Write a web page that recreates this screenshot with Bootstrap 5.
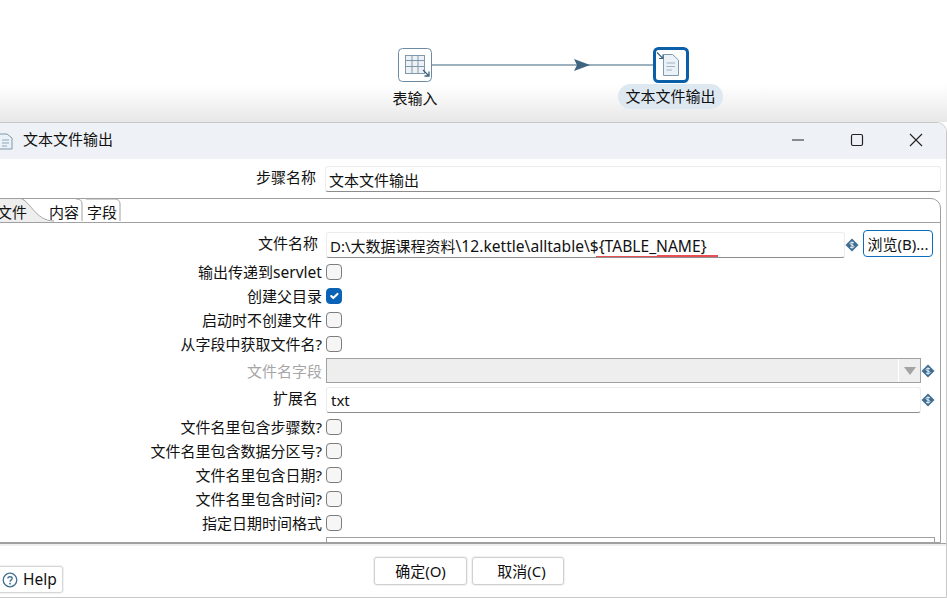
<!DOCTYPE html>
<html lang="zh">
<head>
<meta charset="utf-8">
<title>文本文件输出</title>
<link href="https://cdn.jsdelivr.net/npm/bootstrap@5.3.0/dist/css/bootstrap.min.css" rel="stylesheet">
<style>
html,body{margin:0;height:598px;overflow:hidden;background:#fff}
body{width:947px;font-family:"Noto Sans","Noto Sans CJK SC",sans-serif;font-size:15px;color:#111;line-height:20px}
.canvas-area{position:relative;height:122px;background:linear-gradient(#fff 0,#fff 84px,#f6f6f6 100px,#e7e7e7 122px)}
.flow-svg{position:absolute;left:0;top:0}
.node-cap{position:absolute;white-space:nowrap;line-height:25px;height:25px;text-align:center}
.cap-a{left:385px;top:86px;width:60px}
.cap-b{left:618px;top:84px;width:105px;background:#dde8f1;border-radius:13px}
.win{width:957px;height:476px;margin-left:-10px;background:#fff;border:1px solid #c8c8c8;border-radius:0 10px 0 0;overflow:hidden;display:flex;flex-direction:column}
.win-title{height:36px;flex:none;background:#eef2f7;padding-left:32px;line-height:33px}
.win-ico{position:absolute;left:0;top:132px}
.wbtn{width:59px;height:33px;display:flex;align-items:center;justify-content:center}
.wbtn-end{margin-right:1px}
.name-row{height:39px;flex:none}
.lbl{flex:none;text-align:right;white-space:nowrap}
.lbl-n{width:334px;padding-right:9px;margin-top:-3px}
.lbl-t{width:330px;padding-right:8px;margin-top:-4px}
.lbl-c{width:330px;padding-right:4px}
.lbl-off{color:#a6a6a6}
.latin-wide{font-size:15.6px}
.fld{height:26px;border:1px solid #ececec;border-bottom-color:#8d8d8d;border-radius:3px;padding:0 0 0 3px;line-height:27px;color:#111;background:#fff;white-space:nowrap;position:relative;overflow:hidden}
.fld-name{width:616px}
.fld-file{width:519px}
.fld-ext{width:595px;padding-left:4px;line-height:25px}
.folder{position:relative;flex:1;margin-left:4px;width:946px;border:1px solid #a0a0a0;border-radius:0 10px 0 0;overflow:hidden;min-height:0}
.folder-outer{height:346px;flex:none;display:flex;flex-direction:column;border-bottom:1px solid #a0a0a0;box-shadow:0 2px 0 #eee}
.tabbar{position:relative;height:24px;border-bottom:1px solid #a0a0a0}
.tab-svg{position:absolute;left:0;top:-1px}
.tabitem{position:absolute;top:2px;line-height:22px}
.t1{left:1px}.t2{left:53px}.t3{left:91px}
.pane{padding-top:9px}
.rw{display:flex;align-items:center;height:24px;margin:0}
.rw-file{height:26px;margin-bottom:2px}
.rw-combo{height:25px;margin:2px 0 4px}
.rw-ext{height:26px;margin:4px 0 2px}
.ck.form-check-input{width:16px;height:16px;margin:0;border:1px solid #7d7d7d;background-color:#f6f6f6;border-radius:4px;flex:none}
.ck.form-check-input:checked{background-color:#0b63b6;border-color:#0b63b6}
.var-ico{flex:none;display:block}
.combo{width:595px;height:25px;border:1px solid #a0a0a0;background:#eee;display:flex;justify-content:flex-end;align-items:center}
.combo-arrow{width:22px;height:23px;border-left:1px solid #fff;display:flex;align-items:center;justify-content:center}
.tri{width:0;height:0;border-left:6px solid transparent;border-right:6px solid transparent;border-top:8px solid #a3a3a3}
.browse.btn{width:70px;height:27px;padding:0;font-size:15px;line-height:24px;border:1px solid #0b6cc0;border-radius:4px;background:#fff;color:#111;margin-left:4px;margin-top:-3px;white-space:nowrap}
.last-fld{margin-left:330px;width:609px;height:12px;border:1px solid #a0a0a0;border-bottom:0;margin-top:2px}
.foot{flex:1;display:flex;align-items:flex-start}
.dlg-btn.btn{width:93px;height:28px;padding:0;font-size:15px;line-height:26px;background:#fff;border:1px solid #d0d0d0;border-radius:3px;color:#111;margin-top:13px;box-shadow:0 0 0 1px #f2f2f2}
.help.btn{width:66px;height:27px;padding:0 0 0 4px;margin-top:22px;margin-left:6px;font-size:15.5px;line-height:25px;background:#fff;border:1px solid #d6d6d6;border-radius:3px;color:#111;display:flex;align-items:center;gap:5px;box-shadow:0 0 0 1px #f2f2f2}
.ok-gap{margin-left:311px}
.dlg-btn.btn.cancel-gap{margin-left:5px;width:92px;padding-left:7px}
.red-mark{position:absolute;left:269px;top:22px}
</style>
</head>
<body>
<section class="canvas-area">
  <svg class="flow-svg" width="947" height="90" viewBox="0 0 947 90">
    <line x1="432" y1="65" x2="654" y2="65" stroke="#3f6480" stroke-width="1.2"/>
    <path d="M574 59 L590 65 L574 71 L577 65 Z" fill="#3f6480"/>
    <rect x="398.5" y="48.5" width="33" height="33" rx="4" fill="#fff" stroke="#6c8ba3"/>
    <rect x="405.500" y="55.500" width="19" height="18" fill="#eef2f6" stroke="#7f98aa"/>
    <path d="M405.500 60.500H424.500M405.500 66.500H424.500M412 55.500V73.500M418 55.500V73.500" stroke="#7f98aa" fill="none"/>
    <path d="M423 70L429 76M429 71.500V76H424.500" stroke="#3f6480" stroke-width="1.300" fill="none"/>
    <rect x="654.500" y="48.500" width="33" height="33" rx="4" fill="#fff" stroke="#0b5fa8" stroke-width="3"/>
    <path d="M663.500 54.500H672.500L678.500 60V75.500H663.500Z" fill="#eaf2f8" stroke="#7f98aa"/>
    <path d="M666.500 63H675M666.500 66.500H675M666.500 70H672" stroke="#9db2c2" fill="none"/>
    <path d="M657 52.500L663 58.500M663 54.500V58.500H659" stroke="#3f6480" stroke-width="1.200" fill="none"/>
  </svg>
  <div class="node-cap cap-a">表输入</div>
  <div class="node-cap cap-b">文本文件输出</div>
</section>

<main class="win">
  <header class="win-title d-flex justify-content-between">
    <span>文本文件输出</span>
    <span class="d-flex wbtn-end">
      <span class="wbtn"><svg width="14" height="14" viewBox="0 0 14 14"><path d="M1 7H13" stroke="#222" stroke-width="1.100"/></svg></span>
      <span class="wbtn"><svg width="14" height="14" viewBox="0 0 14 14"><rect x="1.500" y="1.500" width="11" height="11" rx="1.500" fill="none" stroke="#222" stroke-width="1.200"/></svg></span>
      <span class="wbtn"><svg width="14" height="14" viewBox="0 0 14 14"><path d="M1 1L13 13M13 1L1 13" stroke="#222" stroke-width="1.100"/></svg></span>
    </span>
  </header>
  <div class="name-row d-flex align-items-center">
    <div class="lbl lbl-n">步骤名称</div>
    <div class="fld fld-name">文本文件输出</div>
  </div>
  <div class="folder-outer">
    <div class="folder">
      <div class="tabbar">
        <svg class="tab-svg" width="130" height="25" viewBox="0 0 130 25">
          <path d="M0 0H22C34 0 38 24 58 24H0Z" fill="#eeeeee"/>
          <path d="M22 0C34 0 38 23 58 23" fill="none" stroke="#a0a0a0"/>
          <path d="M86 23V6C86 2 83 1 80 1" fill="none" stroke="#a0a0a0"/>
          <path d="M124 23V6C124 2 121 1 118 1H90" fill="none" stroke="#a0a0a0"/>
        </svg>
        <span class="tabitem t1">文件</span>
        <span class="tabitem t2">内容</span>
        <span class="tabitem t3">字段</span>
      </div>
      <div class="pane">
        <div class="rw rw-file">
          <div class="lbl lbl-t">文件名称</div>
          <div class="fld fld-file">D:\大数据课程资料<span class="latin-wide">\12.kettle\alltable\${TABLE_NAME}</span>
            <svg class="red-mark" width="122" height="3" viewBox="0 0 122 3"><path d="M0 2H61" stroke="#e0141c" stroke-width="1.500"/><path d="M61 1H122" stroke="#e0141c" stroke-width="1.500"/></svg>
          </div>
          <svg class="var-ico" width="14" height="14" viewBox="0 0 14 14"><path d="M7 0.500L13.500 7L7 13.500L0.500 7Z" fill="#3f6f92"/><path d="M9 5C8 4 5 4 5 5.500S9 7 9 8.500 6 10 5 9M7 3.500V10.500" stroke="#fff" stroke-width="0.900" fill="none"/></svg>
          <button type="button" class="btn browse">浏览(B)...</button>
        </div>
        <div class="rw"><div class="lbl lbl-c">输出传递到<span class="latin-wide">servlet</span></div><input class="form-check-input ck" type="checkbox"></div>
        <div class="rw"><div class="lbl lbl-c">创建父目录</div><input class="form-check-input ck" type="checkbox" checked></div>
        <div class="rw"><div class="lbl lbl-c">启动时不创建文件</div><input class="form-check-input ck" type="checkbox"></div>
        <div class="rw"><div class="lbl lbl-c">从字段中获取文件名?</div><input class="form-check-input ck" type="checkbox"></div>
        <div class="rw rw-combo">
          <div class="lbl lbl-c lbl-off">文件名字段</div>
          <div class="combo"><div class="combo-arrow"><span class="tri"></span></div></div>
          <svg class="var-ico" width="14" height="14" viewBox="0 0 14 14"><path d="M7 0.500L13.500 7L7 13.500L0.500 7Z" fill="#3f6f92"/><path d="M9 5C8 4 5 4 5 5.500S9 7 9 8.500 6 10 5 9M7 3.500V10.500" stroke="#fff" stroke-width="0.900" fill="none"/></svg>
        </div>
        <div class="rw rw-ext">
          <div class="lbl lbl-t">扩展名</div>
          <div class="fld fld-ext">txt</div>
          <svg class="var-ico" width="14" height="14" viewBox="0 0 14 14"><path d="M7 0.500L13.500 7L7 13.500L0.500 7Z" fill="#3f6f92"/><path d="M9 5C8 4 5 4 5 5.500S9 7 9 8.500 6 10 5 9M7 3.500V10.500" stroke="#fff" stroke-width="0.900" fill="none"/></svg>
        </div>
        <div class="rw"><div class="lbl lbl-c">文件名里包含步骤数?</div><input class="form-check-input ck" type="checkbox"></div>
        <div class="rw"><div class="lbl lbl-c">文件名里包含数据分区号?</div><input class="form-check-input ck" type="checkbox"></div>
        <div class="rw"><div class="lbl lbl-c">文件名里包含日期?</div><input class="form-check-input ck" type="checkbox"></div>
        <div class="rw"><div class="lbl lbl-c">文件名里包含时间?</div><input class="form-check-input ck" type="checkbox"></div>
        <div class="rw"><div class="lbl lbl-c">指定日期时间格式</div><input class="form-check-input ck" type="checkbox"></div>
        <div class="last-fld"></div>
      </div>
    </div>
  </div>
  <footer class="foot">
    <button type="button" class="btn help"><svg width="16" height="16" viewBox="0 0 16 16"><circle cx="8" cy="8" r="6.800" fill="none" stroke="#41708f" stroke-width="1.300"/><path d="M5.800 6.400C5.800 4.200 10.200 4.200 10.200 6.400C10.200 8 8 7.800 8 9.800" fill="none" stroke="#41708f" stroke-width="1.300"/><circle cx="8" cy="11.700" r="0.900" fill="#41708f"/></svg>Help</button>
    <button type="button" class="btn dlg-btn ok-gap">确定(O)</button>
    <button type="button" class="btn dlg-btn cancel-gap">取消(C)</button>
  </footer>
</main>
<svg class="win-ico" width="16" height="18" viewBox="0 0 16 18"><path d="M-1 2H7L12 6V17H-1Z" fill="#eaf2f8" stroke="#7f98aa"/><path d="M2 8H9M2 11H9M2 14H7" stroke="#8fa6b8" fill="none"/></svg>
</body>
</html>
